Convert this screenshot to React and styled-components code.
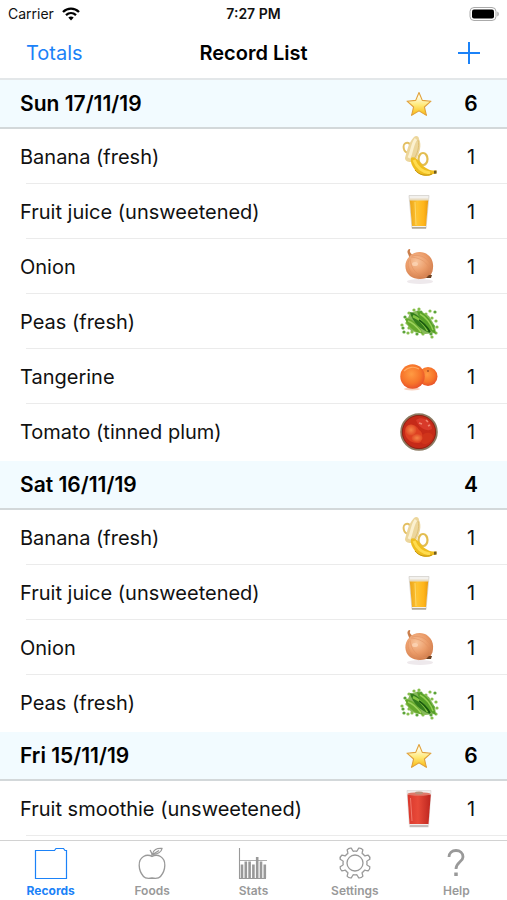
import React, { useState } from "react";
import styled, { createGlobalStyle } from "styled-components";

const GlobalStyle = createGlobalStyle`
  * {
    box-sizing: border-box;
  }
  body {
    margin: 0;
    background-color: white;
    color: #111;
    font-family: Inter, "Liberation Sans", sans-serif;
  }
`;
const Screen = styled.div`
  display: flex;
  flex-direction: column;
  height: 100vh;
  overflow: hidden;
`;
const StatusBar = styled.div`
  display: grid;
  grid-template-columns: 1fr auto 1fr;
  align-items: center;
  height: 28px;
  padding: 0 8px;
  font-size: 14px;
  line-height: 20px;
`;
const Carrier = styled.div`
  display: flex;
  align-items: center;
  gap: 8px;
`;
const Clock = styled.time`
  font-weight: 600;
`;
const BatteryIcon = styled.svg`
  justify-self: end;
`;
const NavBar = styled.header`
  display: grid;
  grid-template-columns: 1fr auto 1fr;
  align-items: center;
  height: 52px;
  padding: 0 26px;
  border-bottom: 2px solid #e3e7e9;
`;
const NavButton = styled.button`
  display: flex;
  justify-self: ${(props) => props.$side};
  padding: 0;
  border: none;
  background: none;
  color: #1b82f8;
  font-family: inherit;
  font-size: 20px;
  line-height: 24px;
  cursor: pointer;
`;
const NavTitle = styled.h1`
  margin: 0;
  color: black;
  font-size: 20px;
  font-weight: 600;
  line-height: 24px;
`;
const RecordList = styled.main`
  flex: 1;
  min-height: 0;
  overflow-y: auto;
  scrollbar-width: none;
`;
const DayHeader = styled.h2`
  display: flex;
  align-items: center;
  height: 49px;
  margin: 0;
  padding: 0 20px;
  border-bottom: 2px solid #d3d8da;
  background-color: #f2fbff;
  color: black;
  font-size: 21px;
  font-weight: 600;
  line-height: 24px;
`;
const DayRecords = styled.ul`
  margin: 0;
  padding: 0 0 2px;
  list-style: none;
`;
const Record = styled.li`
  display: flex;
  align-items: center;
  height: 55px;
  padding: 0 20px;
  background: linear-gradient(#ebebeb, #ebebeb) 26px 100% / 100% 1px no-repeat;
  font-size: 20px;
  line-height: 24px;

  &:last-child {
    background: ${(props) => (props.$more ? "" : "none")};
  }
`;
const Name = styled.span`
  flex: 1;
`;
const Picture = styled.span`
  display: flex;
  justify-content: center;
  width: 40px;
`;
const Count = styled.span`
  width: 32px;
  margin-left: 16px;
  text-align: center;
`;
const TabBar = styled.nav`
  display: grid;
  grid-template-columns: repeat(5, 1fr);
  height: 60px;
  border-top: 1px solid #d2d2d2;
`;
const Tab = styled.button`
  display: flex;
  flex-direction: column;
  align-items: center;
  gap: 3px;
  padding: 5px 0 0;
  border: none;
  background: none;
  color: ${(props) => (props.$active ? "#1b82f8" : "#999")};
  font-family: inherit;
  font-size: 12px;
  font-weight: ${(props) => (props.$active ? 700 : 600)};
  line-height: 16px;
  cursor: pointer;
`;

const Star = () => (
  <svg width="28" height="28" viewBox="0 0 28 28">
    <defs>
      <linearGradient id="star" x1="0" y1="0" x2="0" y2="1">
        <stop offset="0.2" stopColor="#fffbe0" />
        <stop offset="0.55" stopColor="#ffe978" />
        <stop offset="1" stopColor="#f9b80c" />
      </linearGradient>
    </defs>
    <path
      d="M14 2.5L17.3 10.4L26 11.2L19.4 17L21.4 25.4L14 20.9L6.6 25.4L8.6 17L2 11.2L10.7 10.4Z"
      fill="url(#star)"
      stroke="#e0a13c"
      strokeWidth="1.1"
      strokeLinejoin="round"
    />
  </svg>
);

const Banana = () => (
  <svg width="40" height="44" viewBox="0 0 40 44">
    <path
      d="M10 18C4 18 3 9 7 8C11 7 12 11 10 14"
      fill="none"
      stroke="#e3bf62"
      strokeWidth="2"
    />
    <ellipse cx="24" cy="24" rx="4.500" ry="6" fill="none" stroke="#e2bd51" strokeWidth="2.200" />
    <path
      d="M6 23C8 17 9 8 15 2C17 0 20 1 20 4C23 10 21 18 16 26C12 28 6 27 6 23Z"
      fill="#ecd69c"
    />
    <path d="M10 23C13 17 13 9 17 4" fill="none" stroke="#fbf0cf" strokeWidth="3" />
    <path d="M19 5C21 12 18 19 15 24" fill="none" stroke="#dfbf73" strokeWidth="1" />
    <path
      d="M12 23C14 21 17 23 20 26C24 32 29 35 34 35.500L37.500 35.500V38.500L34 39C29 42.500 20 41 16 35C13 31 11 27 12 23Z"
      fill="#efbe20"
    />
    <path d="M15 25C18 33 23 37 31 38" fill="none" stroke="#ffdc4f" strokeWidth="3" />
    <path d="M16 35C20 40 27 41.500 33 39" fill="none" stroke="#c4940f" strokeWidth="1" />
    <path d="M35 35.800L37.500 35.500V38.500L35 38.800Z" fill="#6d5a24" />
  </svg>
);

const Juice = () => (
  <svg width="24" height="36" viewBox="0 0 24 36">
    <defs>
      <linearGradient id="juice">
        <stop offset="0" stopColor="#eba41a" />
        <stop offset="0.4" stopColor="#ffc431" />
        <stop offset="0.75" stopColor="#ffb51a" />
        <stop offset="1" stopColor="#e89b12" />
      </linearGradient>
    </defs>
    <path d="M2 1.500L5 34.500H19L22 1.500Z" fill="#f3f1ed" stroke="#d3d1cd" strokeWidth="0.800" />
    <path d="M2.800 6H21.200L19 32H5Z" fill="url(#juice)" />
    <path d="M2.600 4.500H21.400V6.500H2.800Z" fill="#e9dcc0" />
    <path d="M8 8L9 31" stroke="#ffd96b" strokeWidth="1" />
    <path d="M5 33.800H19" stroke="#aaa18e" strokeWidth="1.400" />
  </svg>
);

const Onion = () => (
  <svg width="40" height="44" viewBox="0 0 40 44">
    <defs>
      <radialGradient id="onion" cx="0.4" cy="0.35" r="0.7">
        <stop offset="0" stopColor="#f8c49c" />
        <stop offset="0.55" stopColor="#eb9c69" />
        <stop offset="1" stopColor="#cf7b4a" />
      </radialGradient>
    </defs>
    <ellipse cx="21" cy="36.500" rx="13" ry="2.500" fill="#eee9ec" />
    <path d="M10 14C11 10 7 8 9 5C10 3 12 4 11 5.500C10 8 14 9 14 12L18 12" fill="#ca7e4c" />
    <path
      d="M10 12C14 7 23 5 29 10C36 15 35 26 31 31C26 35 16 35 11 31C5 26 5 17 10 12Z"
      fill="url(#onion)"
    />
    <path
      d="M12 12C25 13 32 21 31 30M11 14C12 24 18 31 28 32M13 11C24 8 34 17 33 27M10 15C7 22 12 30 20 34"
      fill="none"
      stroke="#df8f60"
      strokeWidth="0.500"
    />
    <ellipse cx="16" cy="19" rx="3" ry="2" fill="#ffe0c5" opacity="0.600" />
    <path d="M27 33L30 30L33 30L32 33Z" fill="#694022" />
  </svg>
);

const looseBeans = [
  [5, 29], [3, 22], [8, 20], [6, 14], [10, 10], [15, 7], [22, 9], [27, 11],
  [31, 8], [36, 9], [33, 15], [37, 18], [34, 23], [38, 24], [37, 30], [32, 31],
  [33, 34], [24, 31], [18, 31], [13, 29], [10, 25], [4, 25], [17, 28], [9, 30],
  [12, 21], [15, 24], [8, 16], [14, 12], [28, 15], [20, 6],
];

const Peas = () => (
  <svg width="40" height="38" viewBox="0 0 40 38">
    <path d="M7 20L11 10L20 7L30 13L36 23L37 30L26 31L12 28Z" fill="#86b85a" />
    {looseBeans.map(([x, y], i) => (
      <circle key={i} cx={x} cy={y} r="1.600" fill={i % 3 ? "#86be4c" : "#5ba339"} />
    ))}
    <path d="M6 16C14 14 21 24 24 31C15 29 9 24 6 16Z" fill="#65a82c" />
    <path d="M11 9C20 11 28 20 31 30C22 27 13 19 11 9Z" fill="#347d1c" />
    <path d="M18 8C28 10 34 19 37 31C28 26 20 18 18 8Z" fill="#55a027" />
    <path d="M14 13C21 16 26 22 29 28" fill="none" stroke="#87c644" strokeWidth="2.500" />
    <path d="M21 11C27 14 32 21 34 27" fill="none" stroke="#96cf54" strokeWidth="1.500" />
    <path d="M9 18C15 20 19 25 22 29" fill="none" stroke="#9dd25c" strokeWidth="1.500" />
    <path d="M20 17C25 20 28 24 31 29" fill="none" stroke="#195a0e" strokeWidth="2" />
  </svg>
);

const Tangerine = () => (
  <svg width="40" height="30" viewBox="0 0 40 30">
    <defs>
      <radialGradient id="tangerine" cx="0.45" cy="0.4" r="0.6">
        <stop offset="0" stopColor="#ff9b43" />
        <stop offset="0.65" stopColor="#f7752a" />
        <stop offset="1" stopColor="#e8532a" />
      </radialGradient>
    </defs>
    <ellipse cx="13" cy="27" rx="8" ry="1.500" fill="#f9d0bc" />
    <ellipse cx="29" cy="14.500" rx="9.500" ry="9.500" fill="url(#tangerine)" />
    <circle cx="29" cy="9" r="0.900" fill="#a34d20" />
    <circle cx="13.500" cy="14.500" r="12.200" fill="url(#tangerine)" />
    <path d="M5 9C9 5 15 4 20 7" fill="none" stroke="#ffa961" strokeWidth="1.200" />
  </svg>
);

const Tomato = () => (
  <svg width="40" height="40" viewBox="0 0 40 40">
    <defs>
      <radialGradient id="tomato">
        <stop offset="0" stopColor="#f58447" />
        <stop offset="1" stopColor="#e04a26" />
      </radialGradient>
    </defs>
    <circle cx="20" cy="20" r="17.800" fill="#c52a18" stroke="#8b7a62" strokeWidth="2" />
    <circle cx="20" cy="20" r="16.600" fill="none" stroke="#8c2315" strokeWidth="1" />
    <path d="M6 18C7 11 17 11 20 18C24 20 26 29 20 31C12 32 5 26 6 18Z" fill="#dd4022" />
    <path d="M17 8C23 3 33 9 33 17C29 20 20 17 17 8Z" fill="#d83a2a" />
    <path d="M23 24C26 19 34 20 34 25C31 32 25 34 22 30Z" fill="#cf341a" />
    <circle cx="12" cy="18" r="5.500" fill="url(#tomato)" />
    <ellipse cx="18" cy="26" rx="5.500" ry="4" fill="url(#tomato)" />
    <path d="M20 11L23 12M27 8L29 10M29 14L31 13" stroke="#ef8570" strokeWidth="1.600" />
  </svg>
);

const Smoothie = () => (
  <svg width="28" height="40" viewBox="0 0 28 40">
    <defs>
      <linearGradient id="smoothie">
        <stop offset="0" stopColor="#d9372c" />
        <stop offset="0.45" stopColor="#e84a39" />
        <stop offset="1" stopColor="#bd251e" />
      </linearGradient>
    </defs>
    <path d="M2 1.500H26L23.500 38H4.500Z" fill="#f0eceb" stroke="#dedad9" strokeWidth="0.800" />
    <path d="M2.500 5.500H25.800L23.500 35H4.500Z" fill="url(#smoothie)" />
    <ellipse cx="14" cy="5" rx="11.500" ry="1.700" fill="#df7868" />
    <ellipse cx="14" cy="4" rx="4" ry="1.400" fill="#b9917c" />
    <path d="M5.500 9L7 32" stroke="#f1796c" strokeWidth="1" />
    <path d="M5 37H23" stroke="#b9aaa8" strokeWidth="1.500" />
  </svg>
);

const FolderIcon = () => (
  <svg width="34" height="34" viewBox="0 0 34 34" fill="none" stroke="currentColor" strokeWidth="1.200">
    <path d="M1.500 32.500V4.500H20.500L22 2.500H29.500L31 4.500H32.500V32.500Z" />
  </svg>
);

const AppleIcon = () => (
  <svg width="34" height="34" viewBox="0 0 34 34" fill="none" stroke="currentColor" strokeWidth="1.300">
    <path d="M17 10.500C14.500 9 11 9 8.500 10.500C2.500 14 3 24 8.500 30.500C10.500 33 14 32.500 17 32C20 32.500 23.500 33 25.500 30.500C31 24 31.500 14 25.500 10.500C23 9 19.500 9 17 10.500Z" />
    <path d="M17 10.500C17.500 7 16 5.500 15 4M17.500 8.500C18 4 22 2 27 2.500C26.500 6 22.500 8.500 17.500 8.500L24 4.500" />
  </svg>
);

const StatsIcon = () => (
  <svg width="34" height="34" viewBox="0 0 34 34" fill="none" stroke="currentColor">
    <path d="M3.500 2V32.500H30" strokeWidth="1.100" />
    <path d="M4 14.500H31" strokeWidth="0.800" />
    <path
      d="M6 32V18.500M9.800 32V15.500M13.600 32V15.500M17.400 32V18.500M21.200 32V11M25 32V15.500M28.800 32V18.500"
      strokeWidth="2.600"
    />
  </svg>
);

const gearTeeth = [0, 45, 90, 135, 180, 225, 270, 315];
const gearPath = gearTeeth
  .map((angle, i) => {
    const point = (offset, radius) => {
      const a = ((angle + offset - 90) * Math.PI) / 180;
      return `${(17 + radius * Math.cos(a)).toFixed(2)} ${(17 + radius * Math.sin(a)).toFixed(2)}`;
    };
    return `${i ? "L" : "M"}${point(5, 12)}Q${point(9, 11.5)} ${point(11, 13)}L${point(
      14,
      15.3
    )}Q${point(22.5, 16.5)} ${point(31, 15.3)}L${point(34, 13)}Q${point(36, 11.5)} ${point(40, 12)}`;
  })
  .join("");

const GearIcon = () => (
  <svg width="34" height="34" viewBox="0 0 34 34" fill="none" stroke="currentColor" strokeWidth="1.300">
    <path d={`${gearPath}Z`} strokeLinejoin="round" />
    <circle cx="17" cy="17" r="8" />
  </svg>
);

const HelpIcon = () => (
  <svg width="34" height="34" viewBox="0 0 34 34" fill="none" stroke="currentColor" strokeWidth="2.800">
    <path d="M10 11C10 7 13 4.500 17 4.500C21 4.500 24 7 24 11C24 15.500 17 16.500 17 23" />
    <path d="M17 26.500V30" strokeWidth="3.500" />
  </svg>
);

const pictures = {
  banana: Banana,
  juice: Juice,
  onion: Onion,
  peas: Peas,
  tangerine: Tangerine,
  tomato: Tomato,
  smoothie: Smoothie,
};

const days = [
  {
    date: "Sun 17/11/19",
    total: 6,
    star: true,
    records: [
      { name: "Banana (fresh)", picture: "banana", count: 1 },
      { name: "Fruit juice (unsweetened)", picture: "juice", count: 1 },
      { name: "Onion", picture: "onion", count: 1 },
      { name: "Peas (fresh)", picture: "peas", count: 1 },
      { name: "Tangerine", picture: "tangerine", count: 1 },
      { name: "Tomato (tinned plum)", picture: "tomato", count: 1 },
    ],
  },
  {
    date: "Sat 16/11/19",
    total: 4,
    star: false,
    records: [
      { name: "Banana (fresh)", picture: "banana", count: 1 },
      { name: "Fruit juice (unsweetened)", picture: "juice", count: 1 },
      { name: "Onion", picture: "onion", count: 1 },
      { name: "Peas (fresh)", picture: "peas", count: 1 },
    ],
  },
  {
    date: "Fri 15/11/19",
    total: 6,
    star: true,
    more: true,
    records: [{ name: "Fruit smoothie (unsweetened)", picture: "smoothie", count: 1 }],
  },
];

const tabs = [
  { label: "Records", Icon: FolderIcon },
  { label: "Foods", Icon: AppleIcon },
  { label: "Stats", Icon: StatsIcon },
  { label: "Settings", Icon: GearIcon },
  { label: "Help", Icon: HelpIcon },
];

const App = () => {
  const [activeTab, setActiveTab] = useState("Records");

  return (
    <Screen>
      <GlobalStyle />
      <StatusBar>
        <Carrier>
          Carrier
          <svg width="18" height="14" viewBox="0 0 18 14" fill="none" stroke="black" strokeWidth="2.300">
            <path d="M1 5C5.500 0.500 12.500 0.500 17 5" />
            <path d="M4 8.200C7 5.400 11 5.400 14 8.200" />
            <path d="M6.300 10.500C8 9 10 9 11.700 10.500L9 13.500Z" fill="black" stroke="none" />
          </svg>
        </Carrier>
        <Clock>7:27 PM</Clock>
        <BatteryIcon width="30" height="14" viewBox="0 0 30 14">
          <rect x="1" y="0.500" width="26" height="13" rx="4" fill="white" stroke="#aaa" />
          <rect x="3" y="2.500" width="22" height="9" rx="2" fill="black" />
          <path d="M28.300 4.500C30.300 5.500 30.300 8.500 28.300 9.500Z" fill="#aaa" />
        </BatteryIcon>
      </StatusBar>
      <NavBar>
        <NavButton $side="start">Totals</NavButton>
        <NavTitle>Record List</NavTitle>
        <NavButton $side="end" aria-label="Add record">
          <svg width="24" height="24" viewBox="0 0 24 24" stroke="currentColor" strokeWidth="2">
            <path d="M12 1V23M1 12H23" />
          </svg>
        </NavButton>
      </NavBar>
      <RecordList>
        {days.map((day) => (
          <section key={day.date}>
            <DayHeader>
              <Name>{day.date}</Name>
              <Picture>{day.star && <Star />}</Picture>
              <Count>{day.total}</Count>
            </DayHeader>
            <DayRecords>
              {day.records.map((record) => {
                const Food = pictures[record.picture];
                return (
                  <Record key={record.name} $more={day.more}>
                    <Name>{record.name}</Name>
                    <Picture>
                      <Food />
                    </Picture>
                    <Count>{record.count}</Count>
                  </Record>
                );
              })}
            </DayRecords>
          </section>
        ))}
      </RecordList>
      <TabBar>
        {tabs.map(({ label, Icon }) => (
          <Tab key={label} $active={label === activeTab} onClick={() => setActiveTab(label)}>
            <Icon />
            {label}
          </Tab>
        ))}
      </TabBar>
    </Screen>
  );
};

export default App;
